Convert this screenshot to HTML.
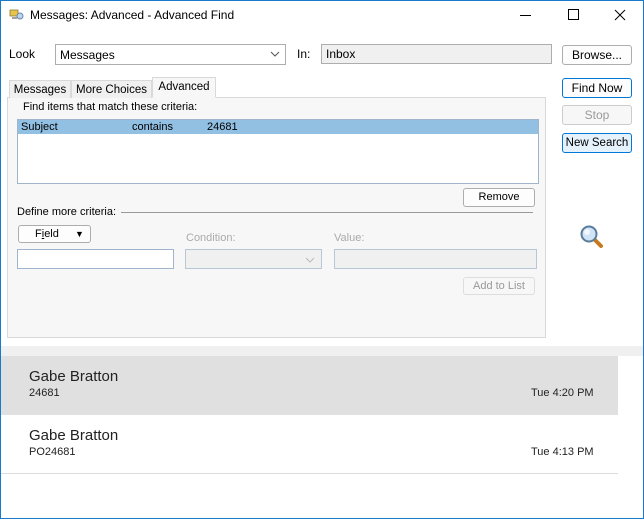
<!DOCTYPE html>
<html><head><style>
*{box-sizing:border-box;margin:0;padding:0}
body{width:644px;height:519px;overflow:hidden;background:#fff;font-family:"Liberation Sans",sans-serif;font-size:12px;color:#000;position:relative}
.frame{position:absolute;left:0;top:0;width:644px;height:519px;border:1px solid #1979ca;}
.a{position:absolute}
.btn{position:absolute;background:#fdfdfd;border:1px solid #adadad;border-radius:3px;text-align:center;font-size:12px;line-height:16px}
.tab{position:absolute;border:1px solid #d9d9d9;border-bottom:none;background:#f0f0f0;text-align:center;font-size:11.5px;line-height:18px}
</style></head><body>
<div class="frame"></div>
<svg class="a" style="left:9px;top:8px" width="16" height="14" viewBox="0 0 16 14"><rect x="1" y="2" width="8" height="6" fill="#e8c44a" stroke="#8a7a3a" stroke-width=".8"/><circle cx="11" cy="8" r="3" fill="#bcd4ee" stroke="#6a86a8"/><rect x="3" y="9" width="5" height="2" fill="#a0a0a0"/></svg>
<div class="a" style="left:30px;top:8px;font-size:12px">Messages: Advanced - Advanced Find</div>
<div class="a" style="left:520px;top:15px;width:11px;height:1px;background:#000"></div>
<div class="a" style="left:568px;top:9px;width:11px;height:11px;border:1px solid #000"></div>
<svg class="a" style="left:614px;top:9px" width="12" height="12"><path d="M1 1L11 11M11 1L1 11" stroke="#000" stroke-width="1"/></svg>

<div class="a" style="left:9px;top:47px">Look</div>
<div class="a" style="left:55px;top:44px;width:231px;height:21px;border:1px solid #adadad;background:#fff;padding:3px 4px">Messages</div>
<svg class="a" style="left:270px;top:51px" width="10" height="7"><path d="M1 1L5 5L9 1" stroke="#555" fill="none"/></svg>
<div class="a" style="left:297px;top:47px">In:</div>
<div class="a" style="left:321px;top:44px;width:231px;height:20px;border:1px solid #adadad;background:#f0f0f0;padding:2px 4px">Inbox</div>
<div class="btn" style="left:562px;top:45px;width:70px;height:20px;line-height:18px">Browse...</div>
<div class="btn" style="left:562px;top:78px;width:70px;height:20px;line-height:18px;border:1px solid #0078d7">Find Now</div>
<div class="btn" style="left:562px;top:105px;width:70px;height:20px;line-height:18px;border-color:#ccc;color:#999;background:#f7f7f7">Stop</div>
<div class="btn" style="left:562px;top:133px;width:70px;height:20px;line-height:18px;border:1px solid #0078d7;background:#e5f1fb;font-size:11.5px">New Search</div>

<div class="a" style="left:7px;top:97px;width:539px;height:241px;border:1px solid #d9d9d9;background:#f7f7f7"></div>
<div class="tab" style="left:9px;top:80px;width:62px;height:18px">Messages</div>
<div class="tab" style="left:71px;top:80px;width:81px;height:18px">More Choices</div>
<div class="tab" style="left:152px;top:77px;width:64px;height:21px;background:#f7f7f7;border-bottom:1px solid #f7f7f7">Advanced</div>
<div class="a" style="left:23px;top:101px;font-size:11px">Find items that match these criteria:</div>
<div class="a" style="left:17px;top:119px;width:522px;height:65px;border:1px solid #a0b4cc;background:#fff"></div>
<div class="a" style="left:18px;top:120px;width:520px;height:14px;background:#92c0e2;font-size:11px;line-height:14px">
<span class="a" style="left:3px">Subject</span><span class="a" style="left:114px">contains</span><span class="a" style="left:189px">24681</span></div>
<div class="btn" style="left:463px;top:188px;width:72px;height:19px;font-size:11px">Remove</div>
<div class="a" style="left:17px;top:206px;font-size:11px">Define more criteria:</div>
<div class="a" style="left:121px;top:212px;width:412px;height:1px;background:#999"></div>
<div class="btn" style="left:18px;top:225px;width:73px;height:18px;font-size:11px;line-height:16px;text-align:left;padding-left:16px">F<u>i</u>eld<span style="position:absolute;left:56px;top:0;font-size:9px">▼</span></div>
<div class="a" style="left:186px;top:232px;font-size:11px;color:#aaa">Condition:</div>
<div class="a" style="left:334px;top:232px;font-size:11px;color:#aaa">Value:</div>
<div class="a" style="left:17px;top:249px;width:157px;height:20px;border:1px solid #a0b4cc;background:#fff"></div>
<div class="a" style="left:185px;top:249px;width:137px;height:20px;border:1px solid #b8c6d6;background:#f0f0f0"></div>
<svg class="a" style="left:305px;top:257px" width="10" height="6"><path d="M1 1L5 5L9 1" stroke="#bbb" fill="none"/></svg>
<div class="a" style="left:334px;top:249px;width:203px;height:20px;border:1px solid #b8c6d6;background:#f0f0f0"></div>
<div class="btn" style="left:463px;top:277px;width:72px;height:18px;font-size:11px;color:#999;border-color:#ddd;background:#f7f7f7">Add to List</div>
<svg class="a" style="left:579px;top:224px" width="26" height="26" viewBox="0 0 26 26"><path d="M14 14L22 22" stroke="#c57a1e" stroke-width="4" stroke-linecap="round"/><circle cx="10" cy="10" r="7.5" fill="#cfe4f6" stroke="#5b7d9c" stroke-width="2"/><circle cx="8" cy="8" r="3" fill="#fff" opacity=".7"/></svg>

<div class="a" style="left:1px;top:346px;width:642px;height:10px;background:#f0f0f0"></div>
<div class="a" style="left:1px;top:356px;width:617px;height:59px;background:#e0e0e0"></div>
<div class="a" style="left:29px;top:368px;font-size:15px;color:#222">Gabe Bratton</div>
<div class="a" style="left:29px;top:387px;font-size:11px;color:#222">24681</div>
<div class="a" style="left:531px;top:387px;font-size:11px;color:#222">Tue 4:20 PM</div>
<div class="a" style="left:29px;top:427px;font-size:15px;color:#222">Gabe Bratton</div>
<div class="a" style="left:29px;top:446px;font-size:11px;color:#222">PO24681</div>
<div class="a" style="left:531px;top:446px;font-size:11px;color:#222">Tue 4:13 PM</div>
<div class="a" style="left:1px;top:473px;width:617px;height:1px;background:#ddd"></div>
</body></html>
